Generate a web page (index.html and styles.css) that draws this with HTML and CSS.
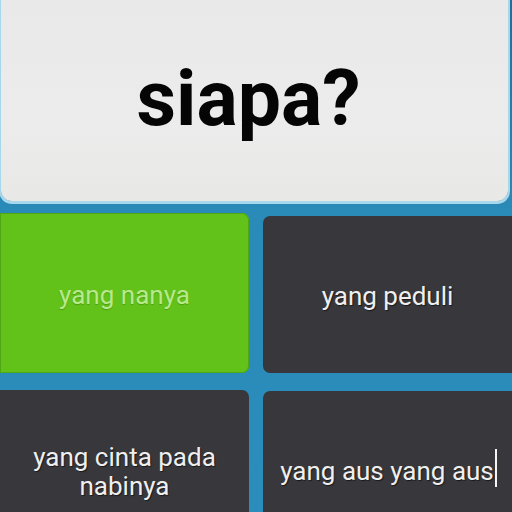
FILE: index.html
```html
<!DOCTYPE html>
<html>
<head>
<meta charset="utf-8">
<link rel="stylesheet" href="styles.css">
</head>
<body>
<div class="screen">
  <div class="question"><span class="qtext">siapa?</span></div>
  <div class="answers">
    <div class="ans correct"><span>yang nanya</span></div>
    <div class="ans dark second"><span>yang peduli</span></div>
    <div class="ans dark third"><span>yang cinta pada<br>nabinya</span></div>
    <div class="ans dark fourth"><span>yang aus yang aus<span class="caret"></span></span></div>
  </div>
</div>
</body>
</html>
```
FILE: styles.css
```css
html, body {
  margin: 0;
  padding: 0;
}
body {
  width: 512px;
  height: 512px;
  overflow: hidden;
  background: #2987b4;
  font-family: Roboto, "Liberation Sans", sans-serif;
}
.screen {
  width: 512px;
  height: 512px;
  display: flex;
  flex-direction: column;
  background: linear-gradient(180deg, #1f6f9a 0px, #2a8bb9 220px, #2b8dbb 512px);
}
.question {
  height: 201px;
  margin-right: 4px;
  margin-left: 1px;
  background: linear-gradient(180deg, #e9e9e9 0%, #ececec 60%, #e8e8e7 100%);
  border-radius: 0 0 11px 11px;
  box-shadow: 0 1px 0 2px #a8d6ea;
  display: flex;
  align-items: center;
  justify-content: center;
}
.qtext {
  font-weight: 700;
  font-size: 77px;
  color: #050505;
  margin-top: -4px;
  margin-right: 12px;
}
.answers {
  margin-top: 12px;
  display: grid;
  grid-template-columns: 249px 249px;
  grid-template-rows: 160px 122px;
  column-gap: 14px;
  row-gap: 17px;
}
.ans {
  display: flex;
  align-items: center;
  justify-content: center;
  text-align: center;
  font-size: 26px;
  line-height: 29px;
}
.correct {
  background: #63c219;
  color: #b7e98c;
  box-shadow: inset 0 0 0 1px #4fa713;
  border-radius: 0 7px 7px 0;
  text-shadow: 0 1px 1px rgba(40, 90, 0, 0.35);
}
.correct span {
  margin-top: 5px;
}
.dark {
  background: #38383c;
  color: #efefef;
  text-shadow: 1px 1px 1px rgba(0, 0, 0, 0.55);
}
.second {
  margin-top: 3px;
  border-radius: 7px 0 0 7px;
}
.second span {
  margin-top: 4px;
}
.third {
  border-radius: 0 7px 0 0;
  align-items: flex-end;
  padding-bottom: 12px;
}
.third span {
  line-height: 28.5px;
}
.fourth {
  margin-top: 1px;
  border-radius: 7px 0 0 0;
  padding-left: 2px;
  align-items: flex-start;
  padding-top: 66px;
}
.caret {
  display: inline-block;
  width: 2px;
  height: 38px;
  margin-top: -9px;
  background: #f4f4f4;
  vertical-align: -7px;
  margin-left: 1px;
}
```
